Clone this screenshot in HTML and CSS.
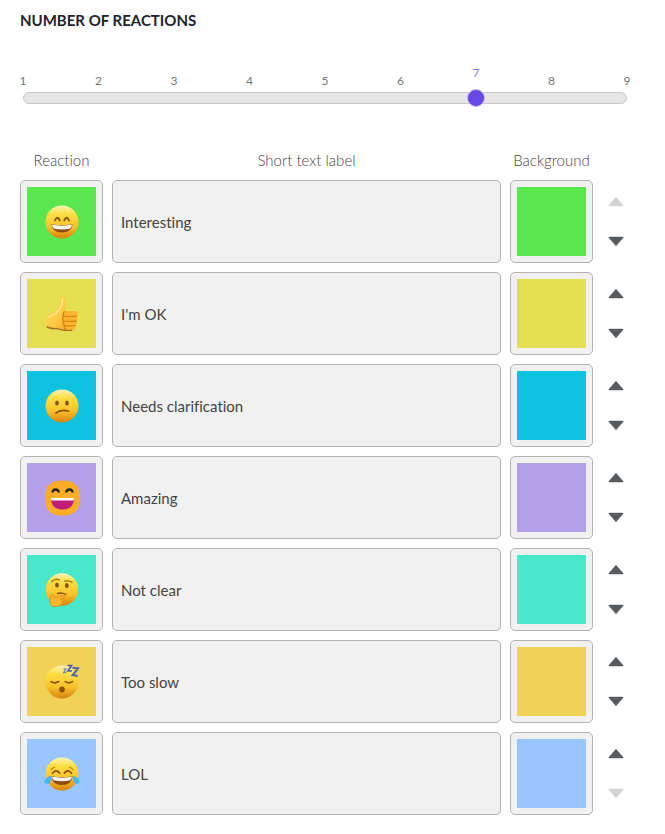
FILE: index.html
```html
<!DOCTYPE html>
<html lang="en">
<head>
  <meta charset="UTF-8" />
  <meta name="viewport" content="width=device-width, initial-scale=1" />
  <title>Reactions</title>
  <link rel="stylesheet" href="styles.css">
</head>
<body>
  <!-- shared gradients and arrow shapes -->
  <svg class="defs" width="0" height="0" aria-hidden="true">
    <defs>
      <linearGradient id="face" x1="0" y1="0" x2="0" y2="1">
        <stop offset="0" stop-color="#fff3b8" />
        <stop offset="0.25" stop-color="#ffdf45" />
        <stop offset="0.65" stop-color="#f9c22b" />
        <stop offset="1" stop-color="#d9820f" />
      </linearGradient>
      <linearGradient id="hand" x1="0" y1="0" x2="1" y2="1">
        <stop offset="0" stop-color="#ffd94f" />
        <stop offset="0.5" stop-color="#fccb45" />
        <stop offset="1" stop-color="#f39a1c" />
      </linearGradient>
      <symbol id="up" viewBox="0 0 16 10">
        <path d="M7.4 .6 Q8 .1 8.6 .6 L15.3 8.2 Q15.7 9.2 14.8 9.3 H1.2 Q.3 9.2 .7 8.2 Z" />
      </symbol>
      <symbol id="down" viewBox="0 0 16 10">
        <path d="M7.4 9.4 Q8 9.9 8.6 9.4 L15.3 1.8 Q15.7 .8 14.8 .7 H1.2 Q.3 .8 .7 1.8 Z" />
      </symbol>
    </defs>
  </svg>

  <form class="container">
    <h1><label for="count">NUMBER OF REACTIONS</label></h1>

    <div class="slider">
      <div class="ticks">
        <span>1</span>
        <span>2</span>
        <span>3</span>
        <span>4</span>
        <span>5</span>
        <span>6</span>
        <span class="active">7</span>
        <span>8</span>
        <span>9</span>
      </div>
      <div class="track">
        <input type="range" id="count" min="1" max="9" step="1" value="7" />
      </div>
    </div>

    <div class="row header">
      <span id="colReaction">Reaction</span>
      <span id="colLabel">Short text label</span>
      <span id="colBackground">Background</span>
    </div>

    <div class="rows">
      <div class="row">
        <button type="button" class="reaction green" aria-labelledby="colReaction">
          <svg class="emoji" viewBox="0 0 36 36">
            <circle cx="18" cy="18" r="16.5" fill="url(#face)" />
            <path d="M11 16.5 Q13.2 11 15.8 16.5 M20.2 16.5 Q22.8 11 25 16.5" fill="none" stroke="#8a5207" stroke-width="1.8" stroke-linecap="round" />
            <path d="M7.5 20 Q18 22.5 28.5 20 Q28 28.5 18 28.5 Q8 28.5 7.5 20Z" fill="#8b4c05" />
            <path d="M8 20.6 Q18 22.8 28 20.6 Q27.5 24.4 25.5 24.8 Q18 26 10.5 24.8 Q8.5 24.4 8 20.6Z" fill="#f4f3ed" />
          </svg>
        </button>
        <input type="text" class="label" aria-labelledby="colLabel" value="Interesting" />
        <input type="color" class="color" aria-labelledby="colBackground" value="#5ae750" />
        <div class="arrows">
          <button type="button" aria-label="Move up" disabled><svg><use href="#up" /></svg></button>
          <button type="button" aria-label="Move down"><svg><use href="#down" /></svg></button>
        </div>
      </div>

      <div class="row">
        <button type="button" class="reaction yellow" aria-labelledby="colReaction">
          <svg class="emoji" viewBox="0 0 36 36">
            <path d="M1.8 19 Q8.5 18.5 12 14 Q15.6 9.5 15.4 4.5 Q15.5 .2 18.8 .8 Q22.6 1.7 22 8 Q21.6 12 20.5 15 H30.5 Q34 15.3 33.8 18 Q33.6 19.5 32.6 20.2 Q34.6 22.5 32.4 25 Q33.6 27.5 31.4 29.4 Q32 33 28.5 34.4 Q22 35.6 14 33 Q8 33.5 2.5 31 Q.5 25 1.8 19Z" fill="url(#hand)" />
            <path d="M20.5 15 Q18.8 17 19.4 20 Q17.8 23 19.6 25 Q18.6 28 20.6 29.8 Q20 33 22 34.6 Q26 35.2 28.5 34.4 Q31.8 33 31.4 29.4 Q33.6 27.5 32.4 25 Q34.6 22.5 32.6 20.2 Q34.4 18.5 33.4 16.4 Q32.4 15 30.5 15Z" fill="#fbb52f" />
            <path d="M20.3 20.3 Q26.5 21 32.4 20.2 M20.3 25.1 Q26.5 25.8 32.2 25 M21 29.8 Q26.5 30.2 31.2 29.4" fill="none" stroke="#dd8314" stroke-width="1.3" stroke-linecap="round" />
            <path d="M20.6 15.2 Q18.4 17.4 19.4 20 Q17.6 22.8 19.6 25.1 Q18.4 27.8 20.6 29.8 Q19.6 32.8 22 34.6" fill="none" stroke="#d98312" stroke-width="1.3" />
            <path d="M2.8 31 Q8 33.2 14 32.8 Q20 35 28 34.2" fill="none" stroke="#a8702a" stroke-width="1.4" />
            <path d="M18.4 3 Q18.8 9 14.8 14 Q11 19 4 21.2" fill="none" stroke="#ffe68a" stroke-width="1.6" stroke-linecap="round" />
          </svg>
        </button>
        <input type="text" class="label" aria-labelledby="colLabel" value="I'm OK" />
        <input type="color" class="color" aria-labelledby="colBackground" value="#e5df53" />
        <div class="arrows">
          <button type="button" aria-label="Move up"><svg><use href="#up" /></svg></button>
          <button type="button" aria-label="Move down"><svg><use href="#down" /></svg></button>
        </div>
      </div>

      <div class="row">
        <button type="button" class="reaction blue" aria-labelledby="colReaction">
          <svg class="emoji" viewBox="0 0 36 36">
            <circle cx="18" cy="18" r="16.5" fill="url(#face)" />
            <ellipse cx="13" cy="15" rx="1.9" ry="2.5" fill="#8a5207" />
            <ellipse cx="23" cy="15" rx="1.9" ry="2.5" fill="#8a5207" />
            <path d="M11.8 25.2 Q17 20.8 24.6 23.2" fill="none" stroke="#8a5207" stroke-width="1.7" stroke-linecap="round" />
          </svg>
        </button>
        <input type="text" class="label" aria-labelledby="colLabel" value="Needs clarification" />
        <input type="color" class="color" aria-labelledby="colBackground" value="#0fc2df" />
        <div class="arrows">
          <button type="button" aria-label="Move up"><svg><use href="#up" /></svg></button>
          <button type="button" aria-label="Move down"><svg><use href="#down" /></svg></button>
        </div>
      </div>

      <div class="row">
        <button type="button" class="reaction purple" aria-labelledby="colReaction">
          <svg class="emoji" viewBox="0 0 36 36">
            <path d="M18.5 .5 C30.5 .5 36 6 36 18 C36 30 30.5 35.5 18.5 35.5 C6.5 35.5 1 30 1 18 C1 6 6.5 .5 18.5 .5Z" fill="#fbae25" />
            <path d="M8.5 12.5 Q8.8 9.5 11.5 9.5 Q14.5 9.5 14.8 12.5 M22.2 12.5 Q22.5 9.5 25.5 9.5 Q28.3 9.5 28.6 12.5" fill="none" stroke="#22242e" stroke-width="2.3" />
            <path d="M7 18.5 H30 Q29.5 29.5 18.5 29.5 Q7.5 29.5 7 18.5Z" fill="#bf1d7c" />
            <path d="M7 18 H30 L29.7 20.5 H7.3Z" fill="#fff" />
          </svg>
        </button>
        <input type="text" class="label" aria-labelledby="colLabel" value="Amazing" />
        <input type="color" class="color" aria-labelledby="colBackground" value="#b5a0ec" />
        <div class="arrows">
          <button type="button" aria-label="Move up"><svg><use href="#up" /></svg></button>
          <button type="button" aria-label="Move down"><svg><use href="#down" /></svg></button>
        </div>
      </div>

      <div class="row">
        <button type="button" class="reaction teal" aria-labelledby="colReaction">
          <svg class="emoji" viewBox="0 0 36 36">
            <circle cx="18" cy="17.5" r="16.2" fill="url(#face)" />
            <ellipse cx="13" cy="13" rx="1.9" ry="2.5" fill="#8a5207" />
            <ellipse cx="22.8" cy="13.5" rx="1.9" ry="2.5" fill="#8a5207" />
            <path d="M7.8 9.6 Q11 5.8 15.5 8 M20.8 9.3 Q24.5 8 28 10.4" fill="none" stroke="#b9780f" stroke-width="1.5" stroke-linecap="round" />
            <path d="M13.5 21.5 Q17.5 20.2 22 22.5" fill="none" stroke="#8a5207" stroke-width="1.4" stroke-linecap="round" />
            <path d="M7.8 22.5 Q9.5 21.6 10 24 L10.4 26 L20 23.3 Q22.2 23.5 21 25.2 L16 27.4 Q19.5 28 18.5 30 Q18.5 32.5 15.8 33.2 Q12 35.5 8.4 34.3 Q5.5 33 6 28.5Z" fill="#fbb72f" stroke="#db8815" stroke-width=".8" />
          </svg>
        </button>
        <input type="text" class="label" aria-labelledby="colLabel" value="Not clear" />
        <input type="color" class="color" aria-labelledby="colBackground" value="#4ae8cb" />
        <div class="arrows">
          <button type="button" aria-label="Move up"><svg><use href="#up" /></svg></button>
          <button type="button" aria-label="Move down"><svg><use href="#down" /></svg></button>
        </div>
      </div>

      <div class="row">
        <button type="button" class="reaction gold" aria-labelledby="colReaction">
          <svg class="emoji" viewBox="0 0 36 36">
            <circle cx="18" cy="18" r="16.5" fill="url(#face)" />
            <path d="M7 17.6 Q10.5 20 14.7 17.6 M21.3 17.6 Q25 20 28.5 17.6" fill="none" stroke="#8a5207" stroke-width="1.7" stroke-linecap="round" />
            <ellipse cx="18" cy="25.5" rx="2.8" ry="3" fill="#8a5207" />
            <path d="M19.5 4.8 H22 L19.7 8.5 H22.3" fill="none" stroke="#7389a8" stroke-width="1.3" />
            <path d="M23.5 1.5 H27.5 L24 7 H28" fill="none" stroke="#465fbd" stroke-width="1.7" />
            <path d="M28.5 3.8 L34 4.3 L28.6 11.3 L33.8 11.8" fill="none" stroke="#4c63b3" stroke-width="2" />
          </svg>
        </button>
        <input type="text" class="label" aria-labelledby="colLabel" value="Too slow" />
        <input type="color" class="color" aria-labelledby="colBackground" value="#f1d257" />
        <div class="arrows">
          <button type="button" aria-label="Move up"><svg><use href="#up" /></svg></button>
          <button type="button" aria-label="Move down"><svg><use href="#down" /></svg></button>
        </div>
      </div>

      <div class="row">
        <button type="button" class="reaction sky" aria-labelledby="colReaction">
          <svg class="emoji" viewBox="0 0 36 36">
            <circle cx="18" cy="18" r="16.5" fill="url(#face)" />
            <path d="M7 13.8 Q8 11.6 10.5 11.3 M29 13.8 Q28 11.6 25.5 11.3" fill="none" stroke="#c78413" stroke-width="1.2" stroke-linecap="round" />
            <path d="M8.5 17.2 Q12 12.6 15.6 17 M20.4 17 Q24 12.6 27.5 17.2" fill="none" stroke="#8a5207" stroke-width="1.7" stroke-linecap="round" />
            <path d="M7.5 20 Q18 22.5 28.5 20 Q28 29 18 29 Q8 29 7.5 20Z" fill="#8b4c05" />
            <path d="M8 20.6 Q18 22.8 28 20.6 Q27.5 24.2 25.5 24.6 Q18 25.8 10.5 24.6 Q8.5 24.2 8 20.6Z" fill="#f4f3ed" />
            <path d="M6.8 19.5 Q8.2 24.5 5.8 27 Q3.2 29 .8 26.8 Q-1 23 6.8 19.5Z" fill="#45b8ee" />
            <path d="M29.2 19.5 Q27.8 24.5 30.2 27 Q32.8 29 35.2 26.8 Q37 23 29.2 19.5Z" fill="#45b8ee" />
          </svg>
        </button>
        <input type="text" class="label" aria-labelledby="colLabel" value="LOL" />
        <input type="color" class="color" aria-labelledby="colBackground" value="#99c6ff" />
        <div class="arrows">
          <button type="button" aria-label="Move up"><svg><use href="#up" /></svg></button>
          <button type="button" aria-label="Move down" disabled><svg><use href="#down" /></svg></button>
        </div>
      </div>
    </div>
  </form>
</body>
</html>
```
FILE: styles.css
```css
* {
  box-sizing: border-box;
}
body {
  font-family: Lato, sans-serif;
  font-size: 15px;
  line-height: 20px;
  font-variant-ligatures: none;
  background: #fff;
  color: #444;
  margin: 0;
}
.defs {
  display: block;
}
.container {
  padding: 10px 35px 16px 20px;
}
h1 {
  font-size: 15px;
  font-weight: 700;
  color: #20232d;
  margin: 0;
}

/* slider */
.slider {
  margin: 34px 3px 0;
}
.ticks {
  display: flex;
  justify-content: space-between;
  align-items: flex-end;
  height: 24px;
  font-size: 12px;
  line-height: 14px;
  color: #777;
}
.ticks span {
  display: flex;
  justify-content: center;
  width: 0;
}
.ticks .active {
  color: #8b74ee;
  padding-bottom: 8px;
}
.track {
  height: 12px;
  margin-top: 4px;
  background: #e6e6e6;
  border: 1px solid #c8c8c8;
  border-radius: 6px;
}
/* wider than the track so the thumb centre can reach both ends */
.track input {
  -webkit-appearance: none;
  appearance: none;
  display: block;
  width: calc(100% + 18px);
  height: 18px;
  margin: -4px -9px;
  background: transparent;
  cursor: pointer;
}
.track input::-webkit-slider-thumb {
  -webkit-appearance: none;
  width: 18px;
  height: 18px;
  background: #6a48e6;
  border: 1px solid #c5bde6;
  border-radius: 50%;
}

/* rows */
.row {
  display: grid;
  grid-template-columns: 83px 1fr 83px 28px;
  gap: 9px;
}
.header {
  margin: 46px 0 10px;
  font-weight: 300;
  text-align: center;
}
.rows {
  display: flex;
  flex-direction: column;
  gap: 9px;
}
.reaction,
.label,
.color {
  height: 83px;
  background: #f1f1f1;
  border: 1px solid #b3b3b3;
  border-radius: 5px;
}
.reaction,
.color {
  width: 83px;
  padding: 6px;
  cursor: pointer;
}
.reaction {
  display: flex;
  align-items: center;
  justify-content: center;
  background-clip: content-box;
  box-shadow: inset 0 0 0 6px #f1f1f1;
}
.emoji {
  width: 36px;
  height: 36px;
}
.green { background-color: #5ae750; }
.yellow { background-color: #e5df53; }
.blue { background-color: #0fc2df; }
.purple { background-color: #b5a0ec; }
.teal { background-color: #4ae8cb; }
.gold { background-color: #f1d257; }
.sky { background-color: #99c6ff; }
.label {
  width: 100%;
  min-width: 0;
  padding: 0 8px;
  font: inherit;
  font-variant-ligatures: none;
  color: #444;
}
.color {
  -webkit-appearance: none;
  appearance: none;
}
.color::-webkit-color-swatch-wrapper {
  padding: 0;
}
.color::-webkit-color-swatch {
  border: none;
  border-radius: 0;
}
.arrows {
  display: flex;
  flex-direction: column;
  justify-content: center;
}
.arrows button {
  display: flex;
  align-items: center;
  justify-content: center;
  height: 39px;
  padding: 0;
  background: none;
  border: none;
  color: #555b5f;
  cursor: pointer;
}
.arrows button:disabled {
  color: #d4d4d4;
  cursor: default;
}
.arrows svg {
  width: 16px;
  height: 10px;
  fill: currentColor;
}
```
